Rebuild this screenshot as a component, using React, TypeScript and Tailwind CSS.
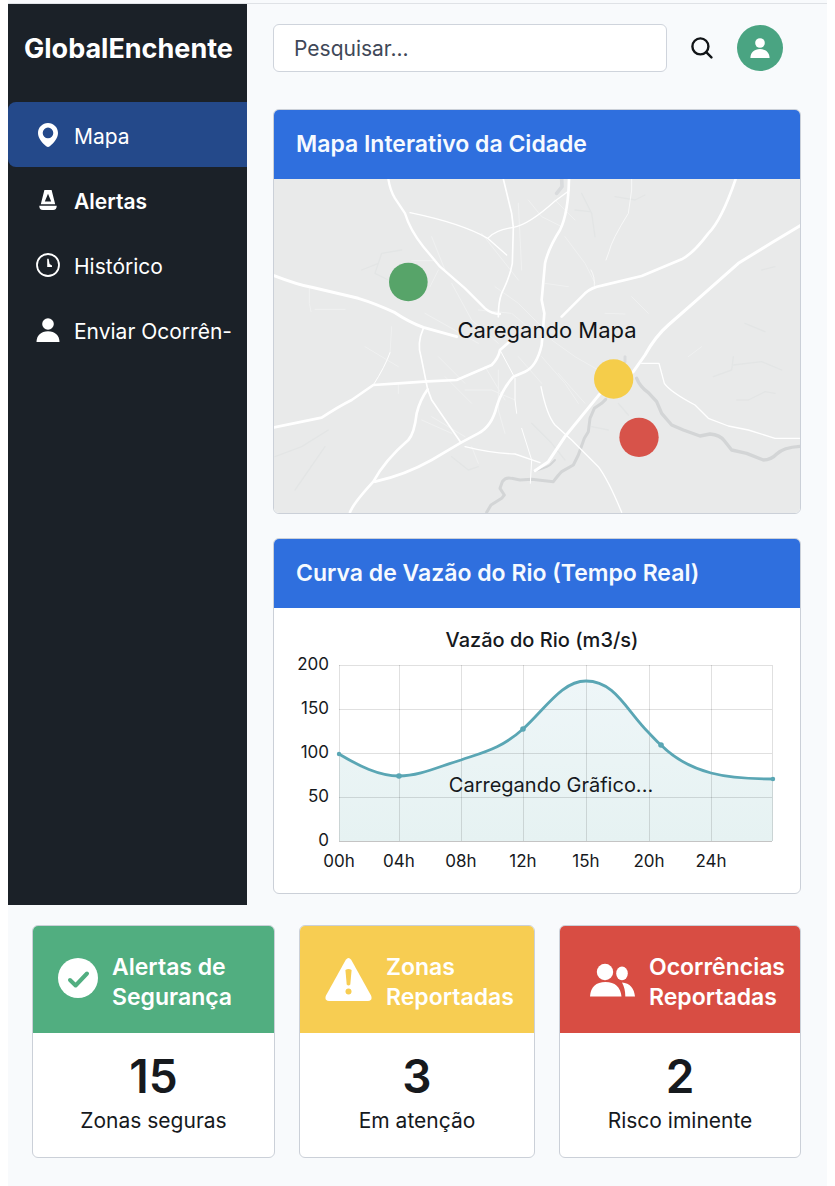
import type { ReactNode } from "react";

type IconProps = { className?: string };

function PinIcon({ className }: IconProps) {
  return (
    <svg viewBox="0 0 20 24" className={className} fill="currentColor" aria-hidden="true">
      <path
        fillRule="evenodd"
        d="M10 0C4.500 0 0 4.400 0 9.900C0 15.500 4.600 20 8.200 23.200Q10 24.600 11.800 23.200C15.400 20 20 15.500 20 9.900C20 4.400 15.500 0 10 0ZM10 4.600A5.300 5.300 0 1 1 10 15.200A5.300 5.300 0 0 1 10 4.600Z"
      />
    </svg>
  );
}

function BeaconIcon({ className }: IconProps) {
  return (
    <svg viewBox="0 0 18 20" className={className} fill="currentColor" aria-hidden="true">
      <path fillRule="evenodd" d="M5.400 0H12.600L16.200 14.200H1.800ZM9 3.800L5.800 11.600H12.200Z" />
      <path d="M0.300 15.800H17.700Q17.800 20 14 20H4Q0.200 20 0.300 15.800Z" />
    </svg>
  );
}

function ClockIcon({ className }: IconProps) {
  return (
    <svg viewBox="0 0 24 24" className={className} fill="none" stroke="currentColor" aria-hidden="true">
      <circle cx="12" cy="12" r="11" strokeWidth="1.800" />
      <path d="M11.200 5.800H12.600L13.600 11L16 12.400V14H11.200Z" fill="currentColor" stroke="none" />
    </svg>
  );
}

function PersonIcon({ className }: IconProps) {
  return (
    <svg viewBox="0 0 24 24" className={className} fill="currentColor" aria-hidden="true">
      <circle cx="12" cy="6" r="5.800" />
      <path d="M0.500 24C0.500 17.500 5 13.200 12 13.200S23.500 17.500 23.500 24Z" />
    </svg>
  );
}

function SearchIcon({ className }: IconProps) {
  return (
    <svg viewBox="0 0 22 22" className={className} fill="none" stroke="currentColor" strokeWidth="2.400" strokeLinecap="round" aria-hidden="true">
      <circle cx="9.400" cy="9.400" r="8" />
      <path d="M15.200 15.200L20.400 20.400" />
    </svg>
  );
}

function CheckIcon({ className }: IconProps) {
  return (
    <svg viewBox="0 0 40 40" className={className} aria-hidden="true">
      <circle cx="20" cy="20" r="20" fill="currentColor" />
      <path d="M12 22L17.600 27.500L29 15.500" fill="none" stroke="#51ae80" strokeWidth="4" strokeLinecap="round" strokeLinejoin="round" />
    </svg>
  );
}

function WarningIcon({ className }: IconProps) {
  return (
    <svg viewBox="0 -4 47 47" className={className} aria-hidden="true">
      <path
        d="M20.800 1.800Q23.500 -1.600 26.200 1.800L46 37.500Q48 42.600 43 43H4Q-1 42.600 1 37.500Z"
        fill="currentColor"
      />
      <path d="M20.400 12Q23.500 10.200 26.600 12L25.300 26.500Q23.500 28.500 21.700 26.500Z" fill="#f7cd52" />
      <circle cx="23.500" cy="33.500" r="3" fill="#f7cd52" />
    </svg>
  );
}

function PeopleIcon({ className }: IconProps) {
  return (
    <svg viewBox="0 -4 50 38" className={className} fill="currentColor" aria-hidden="true">
      <circle cx="20" cy="9" r="8.200" />
      <path d="M5 33.500C5.500 24 11 19 20.500 19S35.500 24 36.500 33.500Z" />
      <ellipse cx="37" cy="10.400" rx="5.800" ry="6.800" />
      <path d="M37 19.400C45 20 49.300 25.500 50 33.500H40.300C40.300 27.500 39.300 24 37 19.400Z" />
    </svg>
  );
}

const navItems = [
  { label: "Mapa", icon: <PinIcon className="h-6 w-5" />, style: "rounded-l-lg bg-[#24498a]" },
  { label: "Alertas", icon: <BeaconIcon className="h-5 w-[18px]" />, style: "font-semibold" },
  { label: "Histórico", icon: <ClockIcon className="size-6" />, style: "" },
  { label: "Enviar Ocorrên-", icon: <PersonIcon className="size-6" />, style: "" },
];

function Sidebar() {
  return (
    <aside className="w-[239px] shrink-0 bg-[#1b2128] text-white">
      <p className="flex h-[90px] items-center px-4 text-[27px] font-bold">GlobalEnchente</p>
      <nav className="mt-2 flex flex-col">
        {navItems.map((item) => (
          <a
            key={item.label}
            href="#"
            className={`flex h-[65px] items-center gap-3.5 pl-7 text-[21px] whitespace-nowrap ${item.style}`}
          >
            <span className="flex w-6 justify-center">{item.icon}</span>
            <span className="pt-1">{item.label}</span>
          </a>
        ))}
      </nav>
    </aside>
  );
}

function Panel({ title, children }: { title: string; children: ReactNode }) {
  return (
    <section className="overflow-hidden rounded-md border border-[#cbd0d8] bg-white">
      <h2 className="flex h-[69px] items-center bg-[#2f6fde] px-[22px] text-[23px] font-semibold text-[#f6faff]">
        {title}
      </h2>
      {children}
    </section>
  );
}

function CityMap() {
  return (
    <div className="relative bg-[#e9eaea]">
      <svg viewBox="27 27 1578 1002" className="block w-full" fill="none" strokeLinecap="round" strokeLinejoin="round" aria-hidden="true">
        <g stroke="#e3e5e5" strokeWidth="4">
          <path d="M290 300L340 280L350 250L410 240M340 280L330 310L370 330" />
          <path d="M30 860L110 830L190 780M90 960L180 830" />
          <path d="M950 70L980 130L990 200M930 120L975 125" />
          <path d="M1345 620L1400 600L1405 560M1405 585L1490 575L1550 600" />
          <path d="M1415 690L1450 690L1500 665L1530 670M1490 300L1530 290M1440 460L1500 485" />
          <path d="M560 860L610 900L640 890M800 760L860 820L900 870M980 770L1030 780" />
          <path d="M1060 700L1090 735M1050 80L1110 90L1140 75" />
        </g>
        <g stroke="#f0f1f1" strokeWidth="3">
          <path d="M133 352V400L138 425M150 418H240M440 272H505M520 300L495 350" />
          <path d="M560 340L620 450L700 520M640 420L740 430L800 480M690 350L760 400L830 470" />
          <path d="M380 470L375 550M300 530L400 590M520 560L600 640M540 620L620 700M400 640V670" />
          <path d="M600 660L680 660L750 690M830 560L900 640L940 700M860 510L930 560L1000 600" />
          <path d="M790 90L830 140L890 170M840 340L910 350M1020 430L1080 432M900 200L960 280L990 340" />
          <path d="M500 740L600 800M700 600V720L720 790M760 560L830 640M660 590L720 690" />
          <path d="M870 90L930 150M1100 380L1150 430M1270 560L1310 530M880 610L960 700M650 190L760 330" />
          <path d="M480 430L640 520M470 750L560 790M620 830L640 880M760 100L770 300M500 200L540 300" />
        </g>
        <g stroke="#d3d5d6" strokeWidth="9">
          <path d="M665 1027L678 1005L710 985L718 975L705 955L712 935Q722 920 740 925L765 930L800 928L865 935Q880 915 890 905L925 885L940 855L958 805L970 785L975 745L988 715L1010 700L1022 688" />
          <path d="M1115 625Q1125 650 1150 668L1175 695L1190 730L1220 765L1255 780L1305 798L1335 792Q1365 795 1378 812L1400 840L1445 850L1495 870Q1518 870 1535 852Q1555 832 1605 829" strokeWidth="10" />
          <path d="M808 903Q840 895 855 885L870 870" strokeWidth="6" />
        </g>
        <path d="M890 27L891 50L875 70" stroke="#d9dbdd" strokeWidth="11" />
        <path d="M1080 560V575" stroke="#d9dbdd" strokeWidth="9" />
        <g stroke="#ffffff" strokeWidth="4">
          <path d="M435 128Q590 160 668 205L725 255M668 205Q690 180 745 172Q790 165 870 93L912 62" />
          <path d="M715 27L740 130L745 172L742 280Q735 320 710 370Q700 395 700 440" strokeWidth="5" />
          <path d="M475 475Q455 520 468 560L488 658L500 690L588 818" strokeWidth="5" />
          <path d="M325 645Q360 590 375 548M705 540L745 615M750 625V690L755 730M770 775L800 870L796 940" strokeWidth="3" />
          <path d="M600 830Q680 850 750 852L825 878M828 650Q845 735 870 765L920 810L1000 890Q1030 930 1070 1027" />
          <path d="M1100 27V60L1090 130Q1040 210 1032 245L1023 270M978 300Q990 320 988 348" strokeWidth="2" />
          <path d="M1130 580H1182L1198 640Q1215 665 1290 705L1330 745L1390 768L1450 780L1530 805H1605" />
        </g>
        <g stroke="#ffffff" strokeWidth="9">
          <path d="M370 27Q375 60 390 85L420 130Q435 180 475 230L525 290L600 355L660 415Q680 432 705 432" strokeWidth="7" />
          <path d="M27 317Q100 345 140 352L280 385Q330 400 390 428Q430 455 475 472L575 500" />
          <path d="M27 772L170 743Q220 710 260 690L325 645L400 640L488 634L575 630L680 585Q700 565 705 540L730 518" strokeWidth="8" />
          <path d="M255 1027Q265 1000 325 935Q360 870 430 810Q448 790 455 730Q465 690 488 658" strokeWidth="8" />
          <path d="M330 935Q420 915 500 870L588 818L640 790Q680 770 695 710Q710 660 745 620L780 605Q815 590 830 525L838 430L830 390L840 280Q850 235 885 180Q910 130 912 27" strokeWidth="8" />
          <path d="M890 440L920 410L960 370Q980 352 1010 347L1130 318L1250 268Q1285 250 1330 190Q1370 150 1412 27" strokeWidth="8" />
          <path d="M1605 167L1520 218L1420 280L1290 395L1210 465Q1170 500 1140 555L1105 605L1010 665L900 800L850 875L810 902" strokeWidth="9" />
        </g>
        <circle cx="430" cy="336" r="58" fill="#57a469" />
        <circle cx="1046" cy="627" r="59" fill="#f5cd4a" />
        <circle cx="1122" cy="802" r="59" fill="#d7534a" />
      </svg>
      <p className="absolute inset-0 flex items-center justify-center pb-8 pl-5 text-[22px] text-[#111417]">
        Caregando Mapa
      </p>
    </div>
  );
}

const gridX = [65, 125, 187, 249, 312, 375, 437, 498];
const gridY = [57, 101, 145, 189, 233];
const hours = ["00h", "04h", "08h", "12h", "15h", "20h", "24h"];
const flows = [200, 150, 100, 50, 0];
const curve =
  "M65 146C85 158 105 168 125 168C146 168 166 158 187 152C210 144 228 140 249 121C272 100 288 73 312 73C341 73 352 102 375 125C379 129 382 133 387 137C400 150 418 160 437 165C456 170 476 171 499 171";

function FlowChart() {
  return (
    <svg viewBox="0 0 526 285" className="block w-full" fill="#16191d" fontSize="17">
      <defs>
        <linearGradient id="flow-fill" x1="0" y1="0" x2="0" y2="1">
          <stop offset="0" stopColor="#eef6f8" />
          <stop offset="1" stopColor="#e6f2f2" />
        </linearGradient>
      </defs>
      <text x="268" y="39" textAnchor="middle" fontSize="20" fontWeight="500">
        Vazão do Rio (m3/s)
      </text>
      <path d={`${curve}V233H65Z`} fill="url(#flow-fill)" />
      <g stroke="#000000" strokeOpacity="0.120" shapeRendering="crispEdges">
        {gridX.map((x) => (
          <line key={x} x1={x} x2={x} y1="57" y2="233" />
        ))}
        {gridY.map((y) => (
          <line key={y} x1="65" x2="498" y1={y} y2={y} />
        ))}
        <line x1="65" x2="498" y1="233" y2="233" />
      </g>
      <path d={curve} fill="none" stroke="#5aa6b4" strokeWidth="2.800" />
      <g fill="#5aa6b4">
        <circle cx="65" cy="146" r="2.200" />
        <circle cx="125" cy="168" r="2.800" />
        <circle cx="249" cy="121" r="2.800" />
        <circle cx="387" cy="137" r="2.800" />
        <circle cx="499" cy="171" r="2.200" />
      </g>
      {flows.map((flow, i) => (
        <text key={flow} x="55" y={gridY[i] + 5} textAnchor="end">
          {flow}
        </text>
      ))}
      {hours.map((hour, i) => (
        <text key={hour} x={gridX[i]} y="259" textAnchor="middle">
          {hour}
        </text>
      ))}
      <text x="277" y="184" textAnchor="middle" fontSize="20">
        Carregando Grãfico...
      </text>
    </svg>
  );
}

const stats = [
  { title: ["Alertas de", "Segurança"], value: 15, note: "Zonas seguras", header: "bg-[#51ae80]", icon: <CheckIcon className="w-10 shrink-0" /> },
  { title: ["Zonas", "Reportadas"], value: 3, note: "Em atenção", header: "bg-[#f7cd52]", icon: <WarningIcon className="w-[47px] shrink-0" /> },
  { title: ["Ocorrências", "Reportadas"], value: 2, note: "Risco iminente", header: "bg-[#d84d43]", icon: <PeopleIcon className="w-[50px] shrink-0" /> },
];

export default function App() {
  return (
    <div className="bg-white px-2 font-['Inter','Noto_Sans',sans-serif]">
      <div className="bg-[#f8fafc] pt-[3px] pb-7">
        <div className="flex border-t border-[#dfe2e6]">
          <Sidebar />
          <main className="flex min-w-0 flex-1 flex-col px-[26px] pt-5 pb-[11px]">
            <div className="mb-[37px] flex items-center pr-[18px]">
              <input
                type="search"
                aria-label="Pesquisar"
                placeholder="Pesquisar..."
                className="h-12 min-w-0 flex-1 rounded-md border border-[#cfd4dc] bg-white px-5 text-[21px] text-[#3f4858] placeholder:text-[#3f4858]"
              />
              <button type="button" aria-label="Buscar" className="mx-6 text-[#111417]">
                <SearchIcon className="size-[22px]" />
              </button>
              <button
                type="button"
                aria-label="Perfil"
                className="flex size-[46px] items-center justify-center rounded-full bg-[#4aa482] text-white"
              >
                <PersonIcon className="size-5" />
              </button>
            </div>
            <div className="flex flex-col gap-6">
              <Panel title="Mapa Interativo da Cidade">
                <CityMap />
              </Panel>
              <Panel title="Curva de Vazão do Rio (Tempo Real)">
                <FlowChart />
              </Panel>
            </div>
          </main>
        </div>
        <div className="mt-5 grid grid-cols-[243fr_236fr_242fr] gap-6 pr-[26px] pl-6">
          {stats.map((stat) => (
            <section key={stat.note} className="overflow-hidden rounded-md border border-[#cbd0d8] bg-white text-center text-[#16191d]">
              <div className={`flex h-[107px] items-center gap-3.5 pb-1 pl-[25px] text-white ${stat.header}`}>
                {stat.icon}
                <h2 className="pt-2 text-left text-[23px] leading-[30px] font-semibold whitespace-nowrap">
                  {stat.title[0]}
                  <br />
                  {stat.title[1]}
                </h2>
              </div>
              <p className="pt-4 text-[46px] leading-[54px] font-semibold">{stat.value}</p>
              <p className="pt-0.5 pb-5 text-[21px] leading-8">{stat.note}</p>
            </section>
          ))}
        </div>
      </div>
    </div>
  );
}
